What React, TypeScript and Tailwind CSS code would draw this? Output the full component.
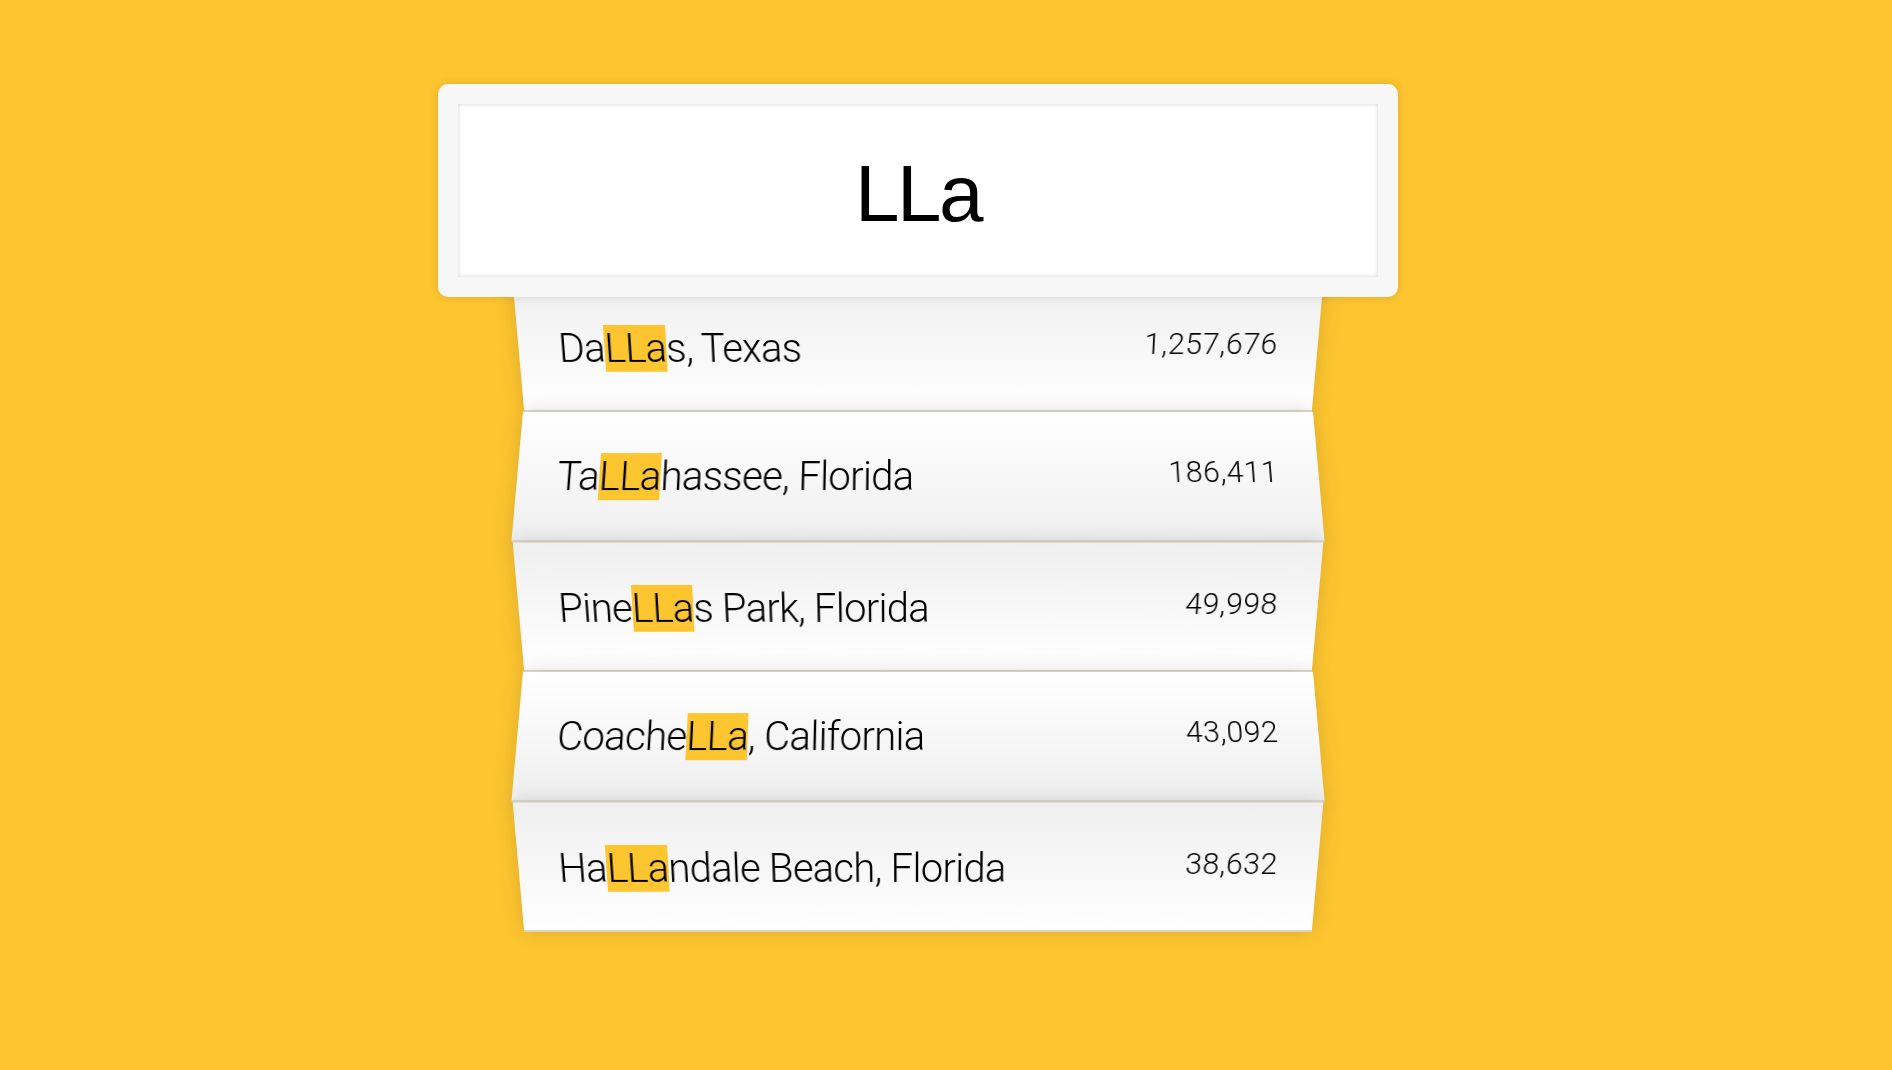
const cities = [
  { pre: "Da", post: "s, Texas", pop: "1,257,676" },
  { pre: "Ta", post: "hassee, Florida", pop: "186,411" },
  { pre: "Pine", post: "s Park, Florida", pop: "49,998" },
  { pre: "Coache", post: ", California", pop: "43,092" },
  { pre: "Ha", post: "ndale Beach, Florida", pop: "38,632" },
];

const query = "LLa";

export default function App() {
  return (
    <div className="min-h-screen bg-[#fdc52f] pt-[64px] font-['Roboto',sans-serif] font-light text-[40px] text-black">
      <form className="ml-[518px] w-[800px]" onSubmit={(e) => e.preventDefault()}>
        <input
          className="relative -left-[80px] top-[20px] z-[2] box-border block h-[213px] w-[960px] rounded-[10px] border-[20px] border-[#f7f7f7] bg-white px-[40px] pt-[7px] text-center font-['Liberation_Sans',sans-serif] text-[80px] font-normal tracking-[-2.5px] text-black shadow-[0_0_10px_rgba(0,0,0,0.12),inset_0_0_4px_rgba(0,0,0,0.19)] outline-none"
          value={query}
          readOnly
        />
        <ul className="relative m-0 p-0">
          {cities.map((c, i) => (
            <li
              key={c.pre + c.post}
              className={`m-0 flex list-none justify-between border-b-2 border-[#d8d8d8] px-[40px] pt-[42px] pb-[38px] leading-[48px] shadow-[0_0_20px_rgba(0,0,0,0.14)] ${
                i % 2 === 0
                  ? "bg-[linear-gradient(to_top,#ffffff_0%,#efefef_100%)] [transform:perspective(235px)_rotateX(-3deg)_translateY(6px)]"
                  : "bg-[linear-gradient(to_bottom,#ffffff_0%,#efefef_100%)] [transform:perspective(235px)_rotateX(3deg)_translateY(4px)_scale(1.001)]"
              }`}
            >
              <span className="tracking-[-0.7px]">
                {c.pre}
                <span className="bg-[#fdc52f]">{query}</span>
                {c.post}
              </span>
              <span className="mt-[1px] text-[30px] leading-[35px] tracking-[0.6px]">{c.pop}</span>
            </li>
          ))}
        </ul>
      </form>
    </div>
  );
}
